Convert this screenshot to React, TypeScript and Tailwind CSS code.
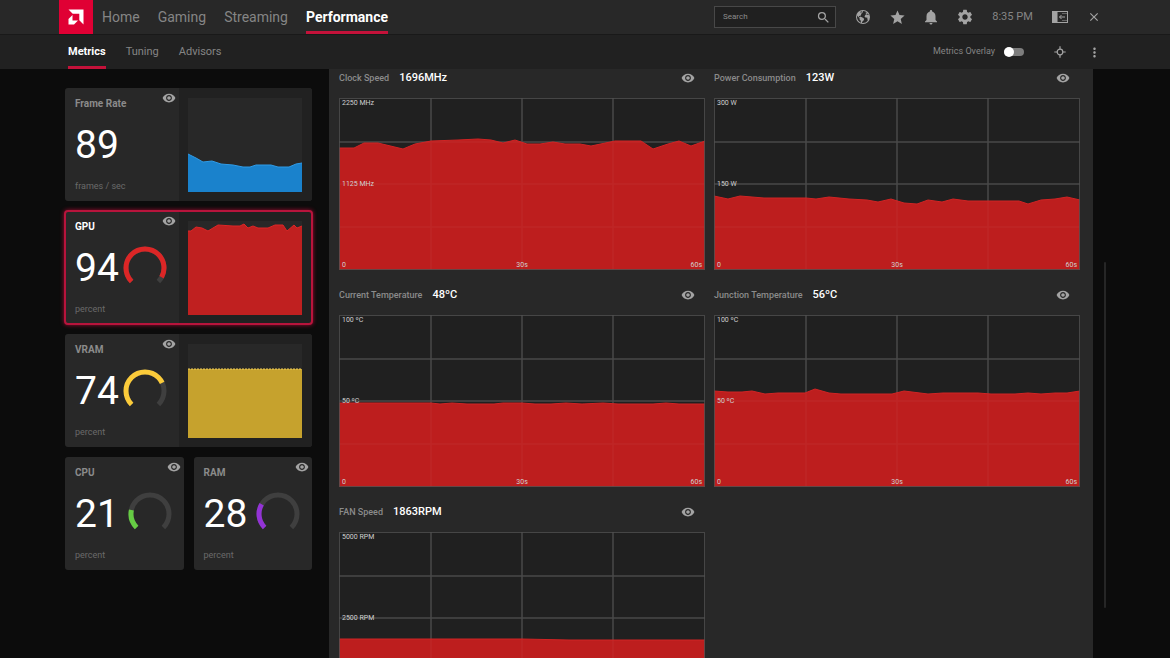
import { useId, useState } from "react";
import type { ReactNode } from "react";
import { IoEarth } from "react-icons/io5";
import {
  MdClose,
  MdMoreVert,
  MdNotifications,
  MdSearch,
  MdSettings,
  MdStar,
  MdVisibility,
} from "react-icons/md";

type Point = [number, number];

const clock: Point[] = [[0, 50], [15, 50], [25, 45], [39, 45], [64, 51], [76, 46], [92, 43], [119, 42], [139, 41], [152, 42], [164, 45], [176, 42], [188, 46], [201, 46], [214, 44], [226, 46], [241, 46], [252, 48], [276, 43], [292, 43], [302, 43], [314, 51], [329, 46], [340, 43], [352, 48], [366, 43]];
const power: Point[] = [[0, 98], [14, 101], [26, 98], [50, 100], [63, 100], [92, 100], [102, 101], [115, 99], [135, 101], [153, 102], [164, 104], [177, 101], [190, 105], [203, 106], [214, 102], [228, 104], [239, 101], [254, 103], [305, 103], [314, 106], [327, 102], [341, 101], [353, 99], [366, 102]];
const current: Point[] = [[0, 88], [92, 88], [101, 89], [113, 88], [128, 89], [155, 89], [164, 88], [183, 88], [196, 89], [212, 89], [227, 88], [243, 89], [264, 88], [279, 89], [314, 89], [327, 88], [340, 89], [366, 89]];
const junction: Point[] = [[0, 76], [14, 77], [28, 77], [38, 76], [51, 79], [64, 78], [91, 78], [101, 74], [115, 78], [127, 79], [178, 79], [190, 76], [214, 79], [229, 78], [264, 78], [277, 79], [301, 79], [314, 78], [327, 79], [341, 78], [353, 78], [366, 76]];
const fan: Point[] = [[0, 107], [183, 107], [230, 108], [366, 108]];

const frames: Point[] = [[0, 56], [8, 60], [15, 64], [24, 63], [33, 66], [45, 67], [55, 69], [62, 69], [68, 67], [83, 67], [90, 69], [101, 69], [108, 66], [114, 65]];
const gpu: Point[] = [[0, 10], [3, 10], [8, 6], [14, 7], [20, 10], [25, 7], [30, 4], [45, 5], [52, 5], [56, 3], [60, 7], [65, 5], [70, 7], [80, 7], [87, 4], [95, 4], [99, 10], [106, 4], [109, 7], [114, 5]];
const vram: Point[] = [[0, 25], [114, 25]];

const line = (points: Point[]) => points.map(([x, y]) => `${x},${y}`).join(" ");

const grid = "M92 0V172M183 0V172M274 0V172M0 44H366M0 86H366M0 129H366";

function EyeButton({ label }: { label: string }) {
  return (
    <button type="button" aria-label={`Toggle ${label}`} className="flex h-[18px] w-[18px] items-center justify-center text-[#a3a3a3]">
      <MdVisibility size={14} />
    </button>
  );
}

function Gauge({ value, color }: { value: number; color: string }) {
  const arc = "M 8.6 35.4 A 19 19 0 1 1 35.4 35.4";
  return (
    <svg viewBox="0 0 44 44" className="h-11 w-11 shrink-0" fill="none" strokeWidth="5" aria-hidden="true">
      <path d={arc} stroke="#3f3f3f" />
      <path d={arc} stroke={color} pathLength={100} strokeDasharray={`${value} 100`} />
    </svg>
  );
}

function MiniChart({ points, fill, stroke, dashed }: { points: Point[]; fill: string; stroke: string; dashed?: boolean }) {
  return (
    <div className="flex-1 bg-[#212121] pt-2.5 pr-2.5 pl-[9px]">
      <svg viewBox="0 0 114 94" preserveAspectRatio="none" className="h-[94px] w-full bg-[#282828]" aria-hidden="true">
        <polygon points={`0,94 ${line(points)} 114,94`} fill={fill} />
        <polyline points={line(points)} fill="none" stroke={stroke} strokeDasharray={dashed ? "2 1" : undefined} />
      </svg>
    </div>
  );
}

interface CardProps {
  title: string;
  value: number;
  unit: string;
  gauge?: string;
  selected?: boolean;
  children?: ReactNode;
}

function MetricCard({ title, value, unit, gauge, selected, children }: CardProps) {
  return (
    <section
      className={
        "flex h-[113px] overflow-hidden rounded-[3px] bg-[#282828] " +
        (selected ? "shadow-[0_0_4px_1px_#a00a30] outline-2 -outline-offset-1 outline-[#b8143c]" : "")
      }
    >
      <div className={"flex flex-col pl-[10px] " + (children ? "w-[114px]" : "w-full")}>
        <div className="flex h-[25px] items-start justify-between pr-px pt-px">
          <h2 className={"pt-[7px] text-[10px] leading-4 font-bold " + (selected ? "text-white" : "text-[#8b8b8b]")}>{title}</h2>
          <EyeButton label={title} />
        </div>
        <div className="flex h-16 items-center justify-between pr-3">
          <span className="text-[39px] leading-none text-white">{value}</span>
          {gauge && <Gauge value={value} color={gauge} />}
        </div>
        <span className="pt-px text-[9px] leading-4 text-[#6a6a6a]">{unit}</span>
      </div>
      {children}
    </section>
  );
}

interface ChartProps {
  title: string;
  value: string;
  max: string;
  mid: string;
  points: Point[];
}

function ChartPanel({ title, value, max, mid, points }: ChartProps) {
  return (
    <section>
      <div className="mb-[11px] flex h-[18px] items-center justify-between pr-2">
        <div className="flex items-center gap-2.5">
          <h3 className="text-[9px] leading-4 font-medium text-[#8b8b8b]">{title}</h3>
          <span className="text-[11px] leading-4 font-medium text-white">{value}</span>
        </div>
        <EyeButton label={title} />
      </div>
      <div className="relative text-[7px] leading-[10px] text-[#d0d0d0]">
        <svg viewBox="0 0 366 172" preserveAspectRatio="none" className="h-[172px] w-full bg-[#202020]" aria-hidden="true">
          <path d={grid} stroke="#424242" strokeWidth="1.5" />
          <polygon points={`0,172 ${line(points)} 366,172`} fill="#bd1e1e" />
          <path d={grid} stroke="#ffffff" strokeOpacity="0.04" strokeWidth="1.5" />
          <polyline points={line(points)} fill="none" stroke="#d02424" />
          <rect x="0.5" y="0.5" width="365" height="171" fill="none" stroke="#505050" strokeOpacity="0.8" />
        </svg>
        <span className="absolute left-[3px] top-0">{max}</span>
        <span className="absolute left-[3px] top-[81px]">{mid}</span>
        <div className="absolute inset-x-[3px] bottom-0 flex justify-between">
          <span className="flex-1">0</span>
          <span>30s</span>
          <span className="flex-1 text-right">60s</span>
        </div>
      </div>
    </section>
  );
}

function NavTab({ label, active, small }: { label: string; active?: boolean; small?: boolean }) {
  return (
    <a
      href="#"
      aria-current={active ? "page" : undefined}
      className={
        "flex h-[34px] items-center border-y-[3px] border-t-transparent " +
        (small ? "text-[11px] " : "text-sm ") +
        (active ? "border-b-[#c4123a] font-bold text-white" : "border-b-transparent text-[#858585]")
      }
    >
      {label}
    </a>
  );
}

function ToolButton({ label, children }: { label: string; children: ReactNode }) {
  return (
    <button type="button" aria-label={label} className="flex h-8 w-[34px] items-center justify-center text-[#a3a3a3]">
      {children}
    </button>
  );
}

export default function App() {
  const [overlay, setOverlay] = useState(false);
  const overlayId = useId();

  return (
    <div className="flex h-screen flex-col overflow-hidden bg-[#0c0c0c] font-['Roboto','Noto_Sans',sans-serif]">
      <header className="flex h-[34px] shrink-0 items-center justify-between bg-[#282828] pl-[59px] pr-[59px]">
        <div className="flex items-center">
          <a href="#" aria-label="AMD Radeon Software" className="mr-[9px] flex h-[34px] w-[34px] items-center justify-center bg-[#e00034]">
            <svg viewBox="0 0 16 16" className="h-4 w-4" fill="#fff" aria-hidden="true">
              <path d="M0.5 0.5H15.5V15.5L11.3 11.3V4.7H4.7Z" />
              <path d="M4.5 6L0.5 10V15.5H6L10 11.5H4.5Z" />
            </svg>
          </a>
          <nav className="flex gap-[18px]" aria-label="Main">
            <NavTab label="Home" />
            <NavTab label="Gaming" />
            <NavTab label="Streaming" />
            <NavTab label="Performance" active />
          </nav>
        </div>
        <div className="flex items-center">
          <label className="mr-2.5 flex h-[22px] w-[122px] items-center border border-[#484848] bg-[#202020] pl-2 pr-1 text-[#a3a3a3]">
            <input type="text" aria-label="Search" placeholder="Search" className="w-full min-w-0 bg-transparent text-[8px] text-white outline-none placeholder:text-[#8b8b8b]" />
            <MdSearch size={15} className="shrink-0" />
          </label>
          <ToolButton label="Web browser"><IoEarth size={16} /></ToolButton>
          <ToolButton label="Favorites"><MdStar size={17} /></ToolButton>
          <ToolButton label="Notifications"><MdNotifications size={18} /></ToolButton>
          <ToolButton label="Settings"><MdSettings size={18} /></ToolButton>
          <span className="w-[61px] text-center text-[11px] whitespace-nowrap text-[#858585]">8:35 PM</span>
          <ToolButton label="Toggle sidebar">
            <svg viewBox="0 0 16 12" className="h-3 w-4" fill="none" stroke="currentColor" aria-hidden="true">
              <rect x="0.5" y="0.5" width="15" height="11" />
              <rect x="1" y="1" width="4.5" height="10" fill="currentColor" stroke="none" />
              <path d="M13 6H7.5M9.5 4L7.5 6L9.5 8" />
              <path d="M10 2.5H15M10 9.5H15" strokeOpacity="0.5" />
            </svg>
          </ToolButton>
          <ToolButton label="Close"><MdClose size={14} /></ToolButton>
        </div>
      </header>

      <div className="flex h-[35px] shrink-0 items-center justify-between border-t border-[#191919] bg-[#212121] pl-[68px] pr-[59px]">
        <nav className="flex gap-5" aria-label="Performance">
          <NavTab label="Metrics" active small />
          <NavTab label="Tuning" small />
          <NavTab label="Advisors" small />
        </nav>
        <div className="flex items-center">
          <label htmlFor={overlayId} className="mr-[9px] text-[9px] text-[#858585]">Metrics Overlay</label>
          <input
            id={overlayId}
            type="checkbox"
            role="switch"
            checked={overlay}
            onChange={() => setOverlay(!overlay)}
            className="mr-[19px] flex h-2 w-5 appearance-none items-center rounded-full bg-[#7d7d7d] before:h-2.5 before:w-2.5 before:shrink-0 before:rounded-full before:bg-white checked:justify-end checked:bg-[#c4123a]"
          />
          <ToolButton label="Calibrate">
            <svg viewBox="0 0 12 12" className="h-3 w-3" fill="none" stroke="currentColor" aria-hidden="true">
              <circle cx="6" cy="6" r="2.8" strokeWidth="1.2" />
              <path d="M6 0.3V3.2M6 8.8V11.7M0.3 6H3.2M8.8 6H11.7" strokeWidth="1.2" />
            </svg>
          </ToolButton>
          <ToolButton label="More options"><MdMoreVert size={15} /></ToolButton>
        </div>
      </div>

      <main className="flex min-h-0 flex-1 pl-[65px] pr-16">
        <aside className="mr-[17px] flex w-[247px] shrink-0 flex-col gap-2.5 pt-[19px]">
          <MetricCard title="Frame Rate" value={89} unit="frames / sec">
            <MiniChart points={frames} fill="#1a82cc" stroke="#2f9be6" />
          </MetricCard>
          <MetricCard title="GPU" value={94} unit="percent" gauge="#dc2626" selected>
            <MiniChart points={gpu} fill="#c02020" stroke="#dc2626" />
          </MetricCard>
          <MetricCard title="VRAM" value={74} unit="percent" gauge="#fbcb3a">
            <MiniChart points={vram} fill="#c6a22d" stroke="#f0cd5a" dashed />
          </MetricCard>
          <div className="grid grid-cols-2 gap-2.5">
            <MetricCard title="CPU" value={21} unit="percent" gauge="#66cc44" />
            <MetricCard title="RAM" value={28} unit="percent" gauge="#9333d6" />
          </div>
        </aside>

        <div className="min-w-0 flex-1 overflow-y-auto bg-[#282828] pl-2.5 pr-[13px] [scrollbar-width:none]">
          <div className="grid grid-cols-2 gap-x-[9px] gap-y-4">
            <ChartPanel title="Clock Speed" value="1696MHz" max="2250 MHz" mid="1125 MHz" points={clock} />
            <ChartPanel title="Power Consumption" value="123W" max="300 W" mid="150 W" points={power} />
            <ChartPanel title="Current Temperature" value="48ºC" max="100 ºC" mid="50 ºC" points={current} />
            <ChartPanel title="Junction Temperature" value="56ºC" max="100 ºC" mid="50 ºC" points={junction} />
            <ChartPanel title="FAN Speed" value="1863RPM" max="5000 RPM" mid="2500 RPM" points={fan} />
          </div>
        </div>
        <div className="flex w-[13px] shrink-0 flex-col items-end pt-[193px]">
          <div className="h-[346px] w-0.5 rounded-full bg-[#262626]" />
        </div>
      </main>
    </div>
  );
}
